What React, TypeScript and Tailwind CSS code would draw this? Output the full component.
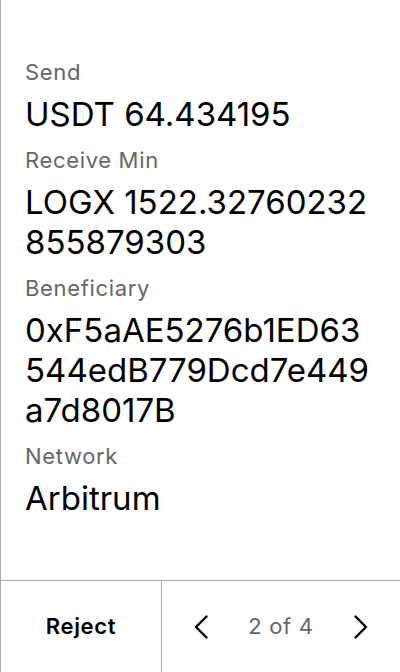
const rows = [
  { label: "Send", value: "USDT 64.434195" },
  { label: "Receive Min", value: "LOGX 1522.32760232855879303" },
  { label: "Beneficiary", value: "0xF5aAE5276b1ED63544edB779Dcd7e449a7d8017B" },
  { label: "Network", value: "Arbitrum" },
];

function Chevron({ dir }: { dir: "left" | "right" }) {
  return (
    <svg width="14" height="24" viewBox="0 0 14 24" fill="none" stroke="currentColor" strokeWidth="2.4" strokeLinecap="round" strokeLinejoin="round">
      {dir === "left" ? <path d="M12.5 1.5L2 12l10.5 10.5" /> : <path d="M1.5 1.5L12 12 1.5 22.5" />}
    </svg>
  );
}

export default function App() {
  return (
    <div
      className="flex h-[672px] w-[400px] flex-col border-l border-[#a9a9a9] bg-white text-black"
      style={{ fontFamily: "Inter, 'Noto Sans', sans-serif" }}
    >
      {/* request details */}
      <div className="flex flex-1 flex-col gap-3 px-6 pt-[58px]">
        {rows.map((r) => (
          <div key={r.label} className="flex flex-col gap-2">
            <div className="text-[22px] leading-[28px] tracking-[0.03em] text-[#666]">{r.label}</div>
            <div className="break-all text-[33px] leading-[40px]">{r.value}</div>
          </div>
        ))}
      </div>

      <div className="grid h-[92px] grid-cols-[160px_1fr] border-t border-[#a9a9a9]">
        <button className="flex items-center justify-center text-[22px] font-semibold tracking-[0.03em]">Reject</button>
        <div className="flex items-center justify-between border-l border-[#a9a9a9] px-8">
          <button aria-label="Previous" className="grid place-items-center">
            <Chevron dir="left" />
          </button>
          <span className="text-[22px] tracking-[0.03em] text-[#666]">2 of 4</span>
          <button aria-label="Next" className="grid place-items-center">
            <Chevron dir="right" />
          </button>
        </div>
      </div>
    </div>
  );
}
